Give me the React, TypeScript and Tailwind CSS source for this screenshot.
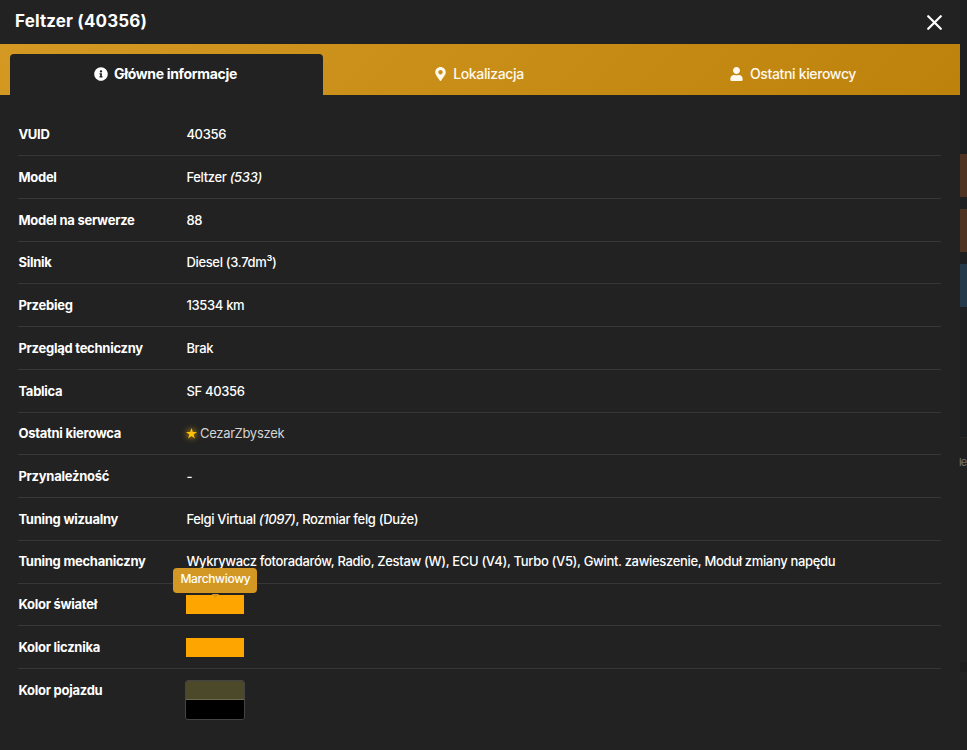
import type { ReactNode } from "react";
import { FaInfoCircle, FaMapMarkerAlt, FaUser } from "react-icons/fa";

type Row = { label: string; value: ReactNode };

const rows: Row[] = [
  { label: "VUID", value: "40356" },
  { label: "Model", value: <>Feltzer <i>(533)</i></> },
  { label: "Model na serwerze", value: "88" },
  { label: "Silnik", value: "Diesel (3.7dm³)" },
  { label: "Przebieg", value: "13534 km" },
  { label: "Przegląd techniczny", value: "Brak" },
  { label: "Tablica", value: "SF 40356" },
  {
    label: "Ostatni kierowca",
    value: (
      <span className="flex items-center gap-[3px] font-normal tracking-[-0.25px] text-[#d4d4d4]">
        <svg className="-ml-[0.5px] size-[11px] text-[#ffc107] drop-shadow-[0_0_3px_#ffc107]" viewBox="0 0 22 22" fill="currentColor">
          <path d="M11 0 13.6 8H22L15.2 13 17.8 21 11 16.1 4.2 21 6.8 13 0 8H8.4Z" />
        </svg>
        CezarZbyszek
      </span>
    ),
  },
  { label: "Przynależność", value: "-" },
  { label: "Tuning wizualny", value: <>Felgi Virtual <i>(1097)</i>, Rozmiar felg (Duże)</> },
  {
    label: "Tuning mechaniczny",
    value: "Wykrywacz fotoradarów, Radio, Zestaw (W), ECU (V4), Turbo (V5), Gwint. zawieszenie, Moduł zmiany napędu",
  },
  {
    label: "Kolor świateł",
    value: (
      <div className="relative -mt-px h-[19px] w-[58px] bg-[#ffa500]">
        <div className="absolute bottom-[21px] left-1/2 flex h-[25px] w-[84px] -translate-x-1/2 items-center justify-center rounded bg-[#d39823] pb-[2px] text-[12px] font-medium tracking-[-0.33px] text-white">
          Marchwiowy
          <span className="absolute -bottom-[5px] left-1/2 h-[4px] w-[8px] -translate-x-1/2 bg-[#d39823] [clip-path:polygon(0_0,100%_0,50%_100%)]" />
        </div>
      </div>
    ),
  },
  { label: "Kolor licznika", value: <div className="-mt-px h-[19px] w-[58px] bg-[#ffa500]" /> },
];

function InfoRow({ label, value }: Row) {
  return (
    <div className="flex h-[42.72px] items-center border-b border-[#373737] pt-px">
      <div className="w-[168px] shrink-0 font-bold tracking-[-0.26px]">{label}</div>
      <div className="whitespace-nowrap font-medium">{value}</div>
    </div>
  );
}

export default function App() {
  return (
    <div className="flex h-[750px] w-[967px] overflow-hidden bg-[#1e1f20] font-['Inter',sans-serif] text-[13px] tracking-[-0.33px] text-white">
      <main className="flex w-[960px] shrink-0 flex-col bg-[#222222]">
        <header className="flex h-11 items-center justify-between pr-[18px] pl-[15px]">
          <h1 className="pb-px text-[17px] font-bold tracking-[0.15px]">Feltzer (40356)</h1>
          <button aria-label="Zamknij">
            <svg className="size-[15px]" viewBox="0 0 15 15" fill="none" stroke="white" strokeWidth="2.2" strokeLinecap="round">
              <path d="M1.2 1.2 13.8 13.8M13.8 1.2 1.2 13.8" />
            </svg>
          </button>
        </header>

        <nav className="flex h-[51px] bg-linear-[135deg,#d39922,#bd820c] px-[10px] pt-[10px] text-[14px] tracking-[-0.35px]">
          <button className="flex w-[313px] items-center justify-center gap-[6px] rounded-t bg-[#222222] pr-[2px] pb-[2px] font-bold tracking-[-0.33px]">
            <FaInfoCircle className="size-[14px]" />
            Główne informacje
          </button>
          <button className="flex w-[313px] items-center justify-center gap-[7px] pb-[2px] font-medium text-[#fff9ee]">
            <FaMapMarkerAlt className="h-[14px] w-[11px]" />
            Lokalizacja
          </button>
          <button className="flex w-[314px] items-center justify-center gap-[7px] pb-[2px] font-medium text-[#fff9ee]">
            <FaUser className="h-[14px] w-[13px]" />
            Ostatni kierowcy
          </button>
        </nav>

        <section className="pr-[19px] pl-[18.4px] pt-[18.6px]">
          {rows.map((row) => (
            <InfoRow key={row.label} {...row} />
          ))}
          <div className="flex pt-[12.5px]">
            <div className="w-[168px] font-bold tracking-[-0.26px]">Kolor pojazdu</div>
            <div className="-mt-px -ml-px flex h-10 w-[60px] flex-col overflow-hidden rounded-[3px] border border-[#444444]">
              <div className="h-[19px] border-b border-[#6c6b4c] bg-[#4c492b]" />
              <div className="flex-1 bg-black" />
            </div>
          </div>
        </section>
      </main>

      {/* edge of the page behind the dialog */}
      <aside className="flex w-[7px] flex-col pt-[154px]">
        <div className="h-[43px] shrink-0 bg-[#4e3323]" />
        <div className="mt-3 h-[43px] shrink-0 bg-[#4e3323]" />
        <div className="mt-3 h-[43px] shrink-0 bg-[#243a4a]" />
        <div className="mt-[130px] h-[225px] shrink-0 border-t border-[#282828] bg-[#212121] pt-[16px] text-[11px] text-[#777777]">
          <span className="-ml-px block tracking-[-1px]">le</span>
        </div>
        <div className="h-[10px] shrink-0 bg-[#1c1c1c]" />
        <div className="flex-1 bg-[#212121]" />
      </aside>
    </div>
  );
}
